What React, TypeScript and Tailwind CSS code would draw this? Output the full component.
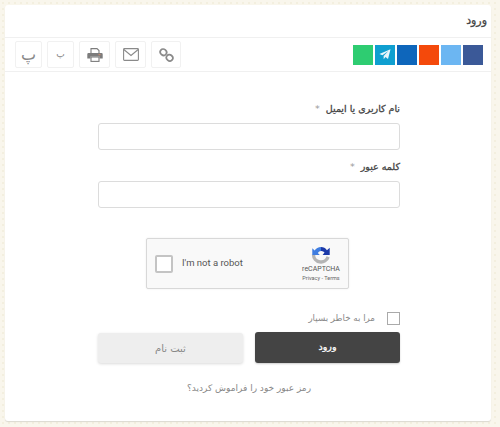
import React from 'react';

const shareColors = ['bg-[#3b5998]', 'bg-[#6cb6f2]', 'bg-[#f4490b]', 'bg-[#0e66bb]', 'bg-[#0f9fd0]', 'bg-[#2ecc71]'];

const toolClass =
  'flex h-[27px] items-center justify-center rounded-[2px] border border-[#f1f1f1] bg-white text-[#888]';

const TelegramIcon = () => (
  <svg width="12" height="11" viewBox="0 0 12 11">
    <path d="M11.5 0.3 L0.4 5 L3.4 6.2 L9.4 2 L4.6 6.9 L4.7 10.3 L6.5 8 L9 9.9 Z" fill="#e8f6fb" />
  </svg>
);

const LinkIcon = () => (
  <svg width="15" height="14" viewBox="0 0 15 14" fill="none" stroke="#8a8a8a" strokeWidth="1.7">
    <ellipse cx="4.4" cy="4.2" rx="3.3" ry="3" transform="rotate(40 4.4 4.2)" />
    <ellipse cx="10.6" cy="9.8" rx="3.3" ry="3" transform="rotate(40 10.6 9.8)" />
  </svg>
);

const MailIcon = () => (
  <svg width="16" height="13" viewBox="0 0 16 13" fill="none" stroke="#8a8a8a" strokeWidth="1.1">
    <rect x="0.6" y="0.6" width="14.8" height="11.8" rx="0.8" />
    <path d="M0.8 1.5 L8 7.5 L15.2 1.5" />
  </svg>
);

const PrintIcon = () => (
  <svg width="16" height="14" viewBox="0 0 16 14">
    <path d="M4 0.6 H10 L12 2.6 V6 H4 Z" fill="#fff" stroke="#7c7c7c" strokeWidth="1.1" />
    <path d="M1.5 5 H14.5 A1.2 1.2 0 0 1 15.7 6.2 V10.5 H12.5 V8.5 H3.5 V10.5 H0.3 V6.2 A1.2 1.2 0 0 1 1.5 5 Z" fill="#7c7c7c" />
    <rect x="4" y="9" width="8" height="4.4" fill="#fff" stroke="#7c7c7c" strokeWidth="1.1" />
    <rect x="11.5" y="6.2" width="2" height="1" fill="#d88a6a" />
  </svg>
);

const RecaptchaLogo = () => (
  <svg width="20" height="19" viewBox="0 0 24 24" fill="none">
    <path d="M2.5 12 A9.5 9.5 0 0 0 21 15" stroke="#b4b4b4" strokeWidth="4.2" />
    <path d="M4 7 A9.5 9.5 0 0 1 12 2.5 L12 7.5 A5 5 0 0 0 8 10 L10.5 12.5 H1 V4 Z" fill="#3f7de0" />
    <path d="M12 2.5 A9.5 9.5 0 0 1 19.5 6.5 L23 3.5 V12.5 H14 L16.5 9.5 A5 5 0 0 0 12 7.5 Z" fill="#1c3aa9" />
  </svg>
);

const App: React.FC = () => {
  return (
    <div className="h-[427px] w-[500px] overflow-hidden bg-[#f9f6ec] bg-[radial-gradient(circle,#f3efdf_1px,transparent_1.5px)] bg-[length:6px_6px] pl-[5px] pr-[9px] pt-[5px] [font-family:'DejaVu_Sans',sans-serif]">
      <div className="h-[416px] rounded-[3px] bg-white shadow-[0_1px_1px_rgba(0,0,0,0.12)]" dir="rtl">
        {/* Title */}
        <div className="flex h-[32px] items-center pr-[4px] pt-[1px] text-[11px] text-[#444] [-webkit-text-stroke:0.3px_#444]">ورود</div>

        {/* Share toolbar */}
        <div className="flex h-[35px] items-center justify-between border-y border-[#f0f0f0] pl-[10px] pr-[8px]">
          <div className="flex gap-[2px]">
            {shareColors.map((color, i) => (
              <div key={color} className={`flex h-[20px] w-[20px] items-center justify-center ${color}`}>
                {i === 4 && <TelegramIcon />}
              </div>
            ))}
          </div>
          <div className="flex">
            <div className={`${toolClass} ml-[5px] w-[30px]`}><LinkIcon /></div>
            <div className={`${toolClass} ml-[5px] w-[31px]`}><MailIcon /></div>
            <div className={`${toolClass} ml-[5px] w-[31px]`}><PrintIcon /></div>
            <div className={`${toolClass} ml-[5px] w-[27px] text-[9px]`}>پ</div>
            <div className={`${toolClass} w-[27px] text-[16px]`}>پ</div>
          </div>
        </div>

        {/* Login form */}
        <div className="ml-[93px] mr-[91px] mt-[30px]">
          <label className="block h-[14px] text-[9.5px] leading-[14px] text-[#444] [-webkit-text-stroke:0.3px_#444]">
            نام کاربری یا ایمیل <span className="mr-[3px] text-[#999] [-webkit-text-stroke:0]">*</span>
          </label>
          <input className="mt-[7px] block h-[27px] w-full rounded-[3px] border border-[#dcdcdc] bg-white" />
          <label className="mt-[10px] block h-[14px] text-[9.5px] leading-[14px] text-[#444] [-webkit-text-stroke:0.3px_#444]">
            کلمه عبور <span className="mr-[3px] text-[#999] [-webkit-text-stroke:0]">*</span>
          </label>
          <input className="mt-[7px] block h-[27px] w-full rounded-[3px] border border-[#dcdcdc] bg-white" />

          {/* reCAPTCHA box */}
          <div className="mt-[30px] flex justify-center pr-[3px]" dir="ltr">
            <div className="flex h-[51px] w-[203px] items-center rounded-[2px] border border-[#d8d8d8] bg-[#f9f9f9] pl-[8px] pr-[8px] shadow-[0_0_2px_rgba(0,0,0,0.08)]">
              <div className="h-[18px] w-[18px] rounded-[2px] border-2 border-[#c4c4c4] bg-white" />
              <span className="ml-[9px] flex-1 text-[9.5px] text-[#555] [font-family:Roboto,sans-serif]">I'm not a robot</span>
              <div className="flex w-[38px] flex-col items-center">
                <RecaptchaLogo />
                <span className="mt-[1px] text-[7px] leading-[9px] text-[#555] [font-family:Roboto,sans-serif]">reCAPTCHA</span>
                <span className="text-[5.5px] leading-[8px] text-[#666] [font-family:Roboto,sans-serif]">Privacy - Terms</span>
              </div>
            </div>
          </div>

          {/* Remember me */}
          <div className="mt-[22px] flex h-[14px] items-center">
            <div className="ml-[12px] h-[13px] w-[13px] border border-[#aaa] bg-white" />
            <span className="pt-[1px] text-[8.7px] text-[#888]">مرا به خاطر بسپار</span>
          </div>

          {/* Buttons */}
          <div className="mt-[7px] flex justify-between">
            <button className="h-[31px] w-[145px] rounded-[3px] bg-[#444] text-[9.5px] text-white shadow-[0_1px_2px_rgba(0,0,0,0.2)] [-webkit-text-stroke:0.3px_#fff]">ورود</button>
            <button className="mt-[1px] h-[30px] w-[145px] rounded-[3px] bg-[#eeeeee] text-[10px] text-[#888] shadow-[0_1px_3px_rgba(0,0,0,0.15)]">ثبت نام</button>
          </div>

          <div className="mt-[19px] text-center text-[9px] text-[#888]">رمز عبور خود را فراموش کردید؟</div>
        </div>
      </div>
    </div>
  );
};

export default App;
